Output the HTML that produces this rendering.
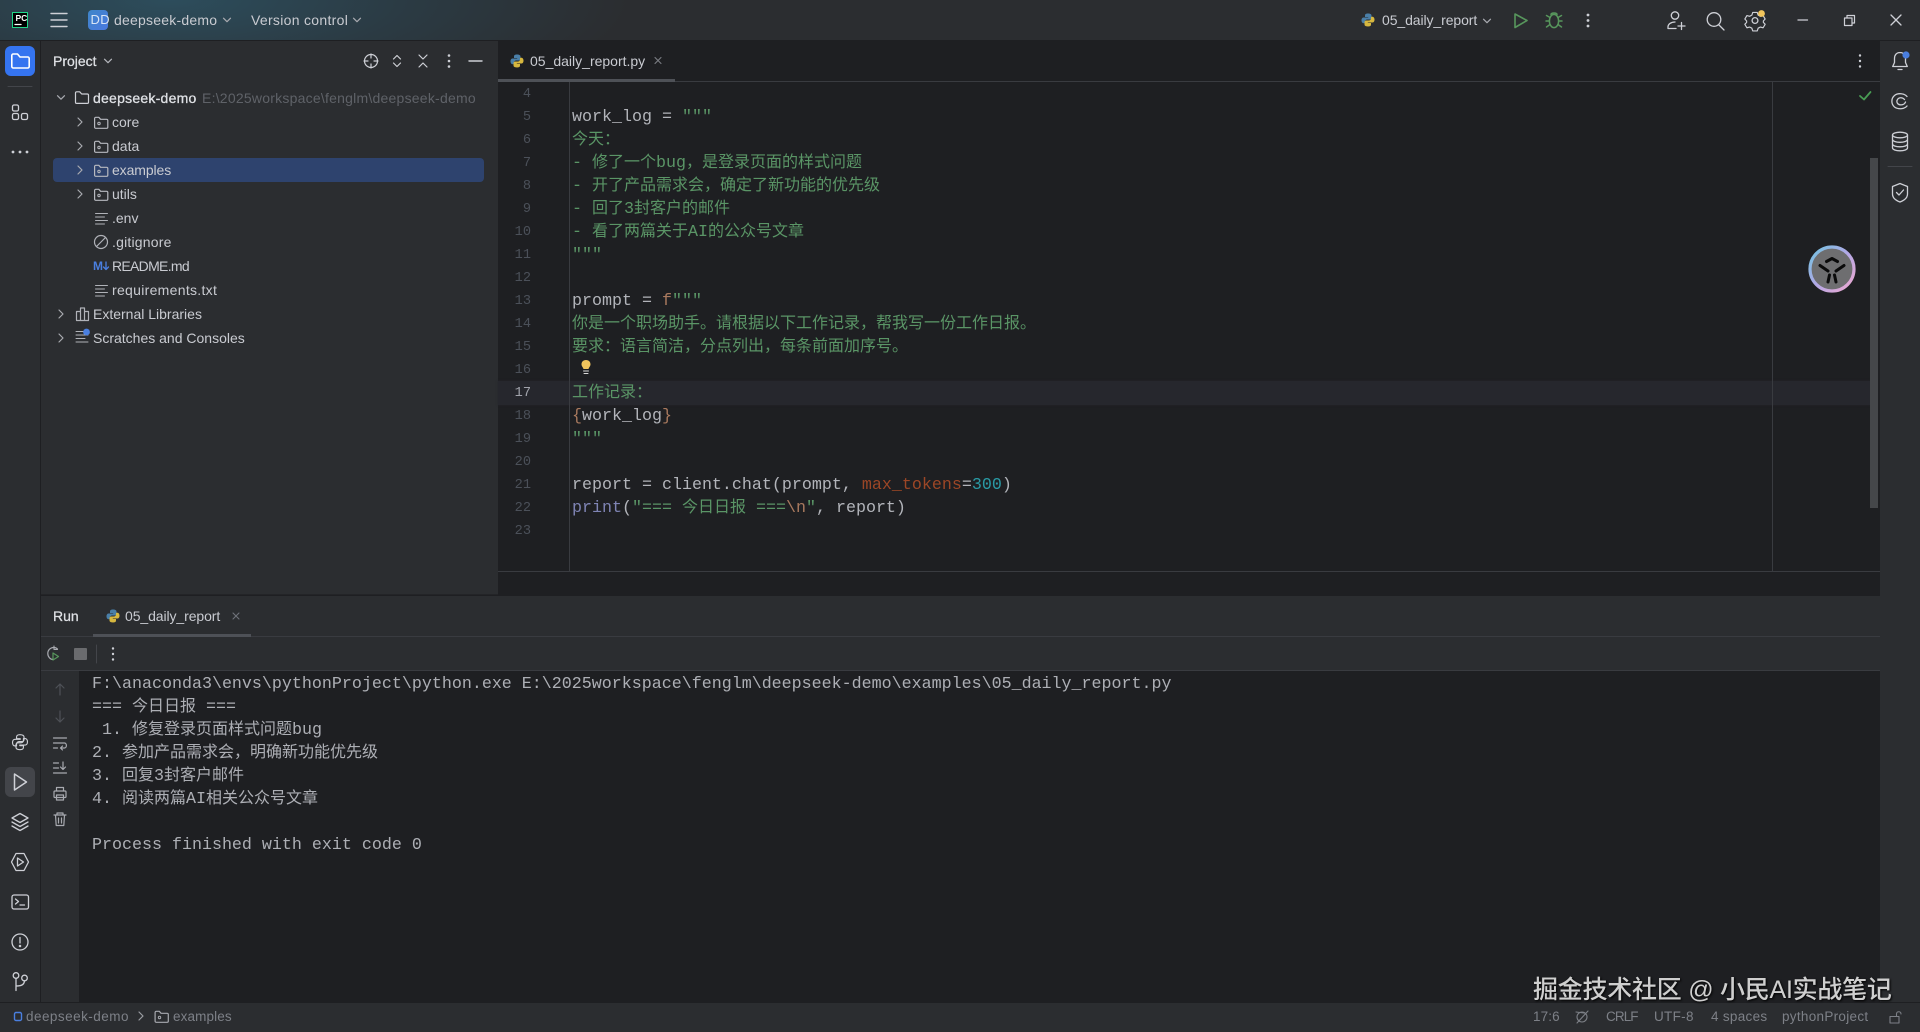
<!DOCTYPE html>
<html lang="zh-CN"><head><meta charset="utf-8"><title>PyCharm</title>
<style>
*{margin:0;padding:0;box-sizing:border-box}
html,body{width:1920px;height:1032px;overflow:hidden;background:#1e1f22}
body{position:relative;font-family:"Liberation Sans","Noto Sans CJK SC",sans-serif;font-size:14px;color:#dfe1e5}
.b{position:absolute}
.t{position:absolute;line-height:20px;height:20px;white-space:pre;color:#c9cbd1}
.c,.n{position:absolute;white-space:pre;font-family:"Liberation Mono","Noto Sans CJK SC",monospace;line-height:23px;height:23px}
.c{left:572px;font-size:16.67px;color:#b2b4ba}
.c i,.o i{font-style:normal;font-size:16px;line-height:0;font-family:"Noto Sans CJK SC",sans-serif}
.n{left:500px;width:31px;text-align:right;font-size:13.6px;color:#4b5059}
.s{color:#5a9566}.k{color:#a8795e}.p{color:#9c4626}.m{color:#2a9aa5}.f{color:#7f84b4}
.o{position:absolute;left:92px;white-space:pre;font-family:"Liberation Mono","Noto Sans CJK SC",monospace;font-size:16.67px;line-height:23px;height:23px;color:#adafb5}
svg{position:absolute;left:0;top:0}
.st{color:#7d8087;font-size:13.5px;letter-spacing:.3px}
</style></head><body>
<!-- backgrounds -->
<div class="b" style="left:0;top:0;width:1920px;height:40px;background:radial-gradient(ellipse 460px 120px at 170px 0,#2d4d5c 0%,#2b3b44 50%,#2b2d30 100%),#2b2d30"></div>
<div class="b" style="left:0;top:40px;width:1920px;height:1px;background:#1e1f22"></div>
<div class="b" style="left:0;top:41px;width:40px;height:961px;background:#2b2d30"></div>
<div class="b" style="left:40px;top:41px;width:1px;height:961px;background:#1e1f22"></div>
<div class="b" style="left:41px;top:41px;width:457px;height:553px;background:#2b2d30"></div>
<div class="b" style="left:498px;top:81px;width:1382px;height:1px;background:#393b40"></div>
<div class="b" style="left:498px;top:381px;width:1372px;height:24px;background:#26272d;box-shadow:0 0 2px #26272d"></div>
<div class="b" style="left:569px;top:82px;width:1px;height:489px;background:#393b40"></div>
<div class="b" style="left:1772px;top:82px;width:1px;height:489px;background:#393b40"></div>
<div class="b" style="left:498px;top:571px;width:1382px;height:1px;background:#393b40"></div>
<div class="b" style="left:1870px;top:158px;width:8px;height:350px;background:#45474a"></div>
<div class="b" style="left:1880px;top:41px;width:40px;height:961px;background:#2b2d30"></div>
<div class="b" style="left:41px;top:594px;width:457px;height:1px;background:#232427"></div>
<div class="b" style="left:41px;top:596px;width:1839px;height:75px;background:#2b2d30"></div>
<div class="b" style="left:41px;top:636px;width:1839px;height:1px;background:#393b40"></div>
<div class="b" style="left:41px;top:670px;width:1839px;height:1px;background:#393b40"></div>
<div class="b" style="left:41px;top:671px;width:38px;height:331px;background:#2b2d30"></div>
<div class="b" style="left:0;top:1002px;width:1920px;height:30px;background:#2b2d30;border-top:1px solid #1e1f22"></div>
<div class="b" style="left:53px;top:158px;width:431px;height:24px;background:#2e436e;border-radius:4px"></div>
<div class="b" style="left:498px;top:79px;width:177px;height:3px;background:#4e5157"></div>
<div class="b" style="left:93px;top:634px;width:158px;height:3px;background:#4e5157"></div>
<div class="b" style="left:5px;top:46px;width:30px;height:30px;background:#3574f0;border-radius:6px"></div>
<div class="b" style="left:5px;top:767px;width:30px;height:30px;background:#43454a;border-radius:6px"></div>
<div class="b" style="left:88px;top:10px;width:20px;height:20px;background:linear-gradient(135deg,#3f86c8,#4a79e0);border-radius:4px"></div>

<!-- icons -->
<svg width="1920" height="1032" viewBox="0 0 1920 1032" fill="none" stroke="#ced0d6" stroke-width="1.2" stroke-linecap="round" stroke-linejoin="round">
<defs>
<g id="fo"><path d="M.6 2a1.2 1.2 0 0 1 1.2-1.2h3l1.8 2h6a1.2 1.2 0 0 1 1.2 1.2v6.6a1.2 1.2 0 0 1-1.2 1.2H1.8A1.2 1.2 0 0 1 .6 10.6z"/><circle cx="5" cy="7" r="1.2" stroke-width="1"/></g>
<g id="ln"><path d="M.5 .5h12M.5 4h9M.5 7.5h12M.5 11h9" stroke-width="1" stroke="#b0b2b8"/></g>
<g id="py" stroke="none"><path fill="#4a7fa8" d="M8 1.5c-3 0-3 1.3-3 2.2V5h3.2v.5H3.7C2.5 5.5 1.5 6.5 1.5 8.3s.9 2.9 2.1 2.9H5V9.6c0-1.2 1-2.1 2.2-2.1h2.6c1 0 1.7-.8 1.7-1.8V3.6c0-1.2-1-2.1-3.5-2.1z"/><path fill="#d6b73f" d="M8 14.5c3 0 3-1.3 3-2.2V11H7.8v-.5h4.5c1.2 0 2.2-1 2.2-2.8s-.9-2.9-2.1-2.9H11v1.6c0 1.2-1 2.1-2.2 2.1H6.2c-1 0-1.7.8-1.7 1.8v2.1c0 1.2 1 2.1 3.5 2.1z"/></g>
<path id="cr" d="M0 -4l4 4-4 4"/>
<path id="cd" d="M-3.5 -1.8l3.5 3.5 3.5-3.5"/>
</defs>
<!-- title bar -->
<rect x="12.5" y="12.5" width="15" height="15" fill="#000" stroke="#21d789" stroke-width="1"/>
<path d="M15 24.5h6" stroke="#fff" stroke-width="1.3"/>
<path d="M51 13.5h16M51 20h16M51 26.5h16" stroke-width="1.4"/>
<use href="#cd" x="227" y="20" stroke="#a8aab0"/>
<use href="#cd" x="357" y="20" stroke="#a8aab0"/>
<use href="#py" x="1360" y="12"/>
<use href="#cd" x="1487" y="21" stroke="#a8aab0"/>
<path d="M1515 14l12 6.5-12 7z" stroke="#57965c" stroke-width="1.6"/>
<g stroke="#57965c" stroke-width="1.5"><ellipse cx="1554" cy="21" rx="4.6" ry="6.6"/><path d="M1551 14.5c0-2 6-2 6 0M1546.5 15.5l3.5 2M1561.5 15.5l-3.5 2M1546 21h3.4M1562 21h-3.4M1546.5 27l3.5-2.5M1561.5 27l-3.5-2.5"/></g>
<g fill="#ced0d6" stroke="none"><circle cx="1588" cy="15" r="1.4"/><circle cx="1588" cy="20.5" r="1.4"/><circle cx="1588" cy="26" r="1.4"/></g>
<g stroke-width="1.3"><circle cx="1675" cy="15.5" r="3.7"/><path d="M1668 28.5v-1.5c0-2.8 3-5 7-5M1668 28.5h8M1681.5 22.5v7M1678 26h7"/>
<circle cx="1714" cy="19.5" r="6.8"/><path d="M1719 25l5 5"/>
<path d="M1752.5 11.5h5l1 3 2.5 1.3 3-.8 2.3 3.8-2 2.2v1.5l2 2.2-2.3 3.8-3-.8-2.5 1.3-1 3h-5l-1-3-2.5-1.3-3 .8-2.3-3.8 2-2.2V21l-2-2.2 2.3-3.8 3 .8 2.5-1.3z" transform="translate(175.5 2.1) scale(.9)"/><circle cx="1755" cy="20.5" r="2.9"/></g>
<circle cx="1761.5" cy="13.5" r="3.4" fill="#f2c55c" stroke="none"/>
<path d="M1798 20h9.5" stroke-width="1.3"/>
<path d="M1844.5 18h7.5v7.5h-7.5zM1847 18v-2.5h7.5v7.5H1852" stroke-width="1.2"/>
<path d="M1891 15l10 10M1901 15l-10 10" stroke-width="1.3"/>
<!-- left strip -->
<path d="M11.8 55.5a1.5 1.5 0 0 1 1.5-1.5h4.2l2.5 3h7.7a1.5 1.5 0 0 1 1.5 1.5v8a1.5 1.5 0 0 1-1.5 1.5H13.3a1.5 1.5 0 0 1-1.5-1.5z" stroke="#fff" stroke-width="1.6"/>
<path d="M8 86.5h24" stroke="#43454a" stroke-width="1"/>
<g stroke-width="1.3"><rect x="12.5" y="105" width="6" height="6" rx="1.5"/><rect x="12.5" y="113.5" width="6" height="6" rx="1.5"/><rect x="21.5" y="113.5" width="6" height="6" rx="1.5"/></g>
<g fill="#ced0d6" stroke="none"><circle cx="13" cy="152" r="1.4"/><circle cx="20" cy="152" r="1.4"/><circle cx="27" cy="152" r="1.4"/></g>
<!-- python console -->
<g stroke-width="1" transform="translate(10.8 733) scale(1.15)"><path d="M8 1.5c-3 0-3 1.3-3 2.2V5h3.2v.5H3.7C2.5 5.5 1.5 6.5 1.5 8.3s.9 2.9 2.1 2.9H5V9.6c0-1.2 1-2.1 2.2-2.1h2.6c1 0 1.7-.8 1.7-1.8V3.6c0-1.2-1-2.1-3.5-2.1z"/><path d="M8 14.5c3 0 3-1.3 3-2.2V11H7.8v-.5h4.5c1.2 0 2.2-1 2.2-2.8s-.9-2.9-2.1-2.9H11v1.6c0 1.2-1 2.1-2.2 2.1H6.2c-1 0-1.7.8-1.7 1.8v2.1c0 1.2 1 2.1 3.5 2.1z"/></g>
<path d="M14.5 774l12 8-12 8z" stroke-width="1.5"/>
<g stroke-width="1.3"><path d="M20 813.5l8 4.5-8 4.5-8-4.5zM12 822l8 4.5 8-4.5M12 826l8 4.5 8-4.5"/>
<path d="M16 853.5h8l4.5 8.5-4.5 8.5h-8l-4.5-8.5z"/><path d="M17.5 858l6 4-6 4z"/>
<rect x="12" y="895" width="16.5" height="14" rx="2"/><path d="M15.5 899l3 2.5-3 2.5M20 905h4.5"/>
<circle cx="20" cy="942" r="8"/><path d="M20 937.5v5.5"/><circle cx="20" cy="946" r=".6"/>
<circle cx="16" cy="975.5" r="2.8"/><circle cx="24.5" cy="978" r="2.8"/><path d="M16 978.5v12M16 986c5 0 8-1 8.500-5"/></g>
<!-- project header -->
<circle cx="371" cy="61" r="6.5"/><path d="M371 54v4M371 64v4M364 61h4M374 61h4"/>
<path d="M393.5 59l3.5-3.5 3.5 3.5M393.5 63l3.5 3.5 3.5-3.5"/>
<path d="M419 55l4 4 4-4M419 67l4-4 4 4"/>
<g fill="#ced0d6" stroke="none"><circle cx="449" cy="55.5" r="1.3"/><circle cx="449" cy="61" r="1.3"/><circle cx="449" cy="66.5" r="1.3"/></g>
<path d="M469 61h13" stroke-width="1.4"/>
<use href="#cd" x="108" y="61" stroke="#b4b6bc"/>
<!-- tree -->
<use href="#cd" x="61" y="97.5" stroke="#a8aab0"/>
<path d="M75.5 93a1.2 1.2 0 0 1 1.2-1.2h3l2 2.2h5.600a1.2 1.2 0 0 1 1.2 1.2v7a1.2 1.2 0 0 1-1.2 1.2H76.7a1.2 1.2 0 0 1-1.2-1.2z"/>
<g stroke="#a8aab0"><use href="#cr" x="78" y="122"/><use href="#cr" x="78" y="146"/><use href="#cr" x="78" y="170"/><use href="#cr" x="78" y="194"/><use href="#cr" x="59" y="314"/><use href="#cr" x="59" y="338"/></g>
<use href="#fo" x="94" y="116.5" stroke="#b8bac0"/><use href="#fo" x="94" y="140.5" stroke="#b8bac0"/><use href="#fo" x="94" y="164.5" stroke="#b8bac0"/><use href="#fo" x="94" y="188.5" stroke="#b8bac0"/>
<use href="#ln" x="95" y="213"/><use href="#ln" x="95" y="285"/>
<g stroke="#b0b2b8"><circle cx="101" cy="242" r="6.5"/><path d="M96.5 246.5l9-9"/>
<path d="M76.5 320v-8.500h4V320M80.5 320v-12h4v12M84.5 320v-8.500h4V320M76.5 320.5h12"/>
<path d="M76 331.5h8M76 335h12M76 338.5h9M76 342h12" stroke-width="1"/></g>
<circle cx="86.5" cy="332" r="3.4" fill="#4a7fe0" stroke="none"/>
<path d="M106 262v7M103.5 267l2.5 2.5 2.5-2.5" stroke="#4a7fe0" stroke-width="1.3"/>
<!-- editor tab -->
<use href="#py" x="509" y="53"/>
<path d="M655 57.5l6 6M661 57.5l-6 6" stroke="#7a7d83" stroke-width="1.1"/>
<g fill="#ced0d6" stroke="none"><circle cx="1860" cy="55.5" r="1.2"/><circle cx="1860" cy="61" r="1.2"/><circle cx="1860" cy="66.5" r="1.2"/></g>
<path d="M1860 96l4 3.5 6.5-7.5" stroke="#499c54" stroke-width="1.8"/>
<!-- bulb -->
<path d="M586 360c-2.8 0-4.500 2-4.500 4.300 0 2 1.500 3 2 4.700h5c.5-1.700 2-2.700 2-4.700 0-2.300-1.700-4.300-4.500-4.300z" fill="#f2c55c" stroke="none"/>
<path d="M583.5 371h5M584 373.500h4" stroke="#d8d8d8" stroke-width="1"/>
<!-- ai circle -->
<defs><linearGradient id="rg" x1="0" y1="0" x2="1" y2="1"><stop offset="0" stop-color="#6fc3e0"/><stop offset=".5" stop-color="#b3a8e6"/><stop offset="1" stop-color="#f0a8cf"/></linearGradient></defs>
<circle cx="1832" cy="269" r="22" fill="#6e6e70" stroke="url(#rg)" stroke-width="3.2"/>
<g stroke="#0a0a0a" stroke-width="3" stroke-linecap="round"><path d="M1820 265.5l8 5.500M1844 265.5l-8 5.500M1826.5 261.5l5.500-3 5.500 3M1829.5 275l-1.500 7M1834.5 275l1.500 7"/></g>
<!-- right strip -->
<g stroke-width="1.3"><path d="M1900 52.5c-3.500 0-5.500 2.500-5.500 6v4l-1.800 4h14.600l-1.800-4v-4c0-3.500-2-6-5.500-6zM1898 69.5h4"/>
<path d="M1907 96.5c-2.500-3-9-4-12.500-1-3.500 3-3.500 8.500 0 11.500 3.500 2.500 9.500 2.500 12.500-1M1904.5 99.5c-2-2.300-5.500-2.300-7 0-1.500 2.300 0 5 2.500 5.300 2.500.3 4.800-.8 5.500-2.800"/>
<ellipse cx="1900" cy="135" rx="7.5" ry="2.8"/><path d="M1892.5 135v13c0 1.500 3.300 2.800 7.500 2.800s7.500-1.300 7.500-2.800v-13M1892.5 139.5c0 1.500 3.300 2.800 7.500 2.800s7.500-1.300 7.500-2.800M1892.5 144c0 1.500 3.300 2.800 7.500 2.800s7.500-1.300 7.500-2.800"/>
<path d="M1888 166.5h24" stroke="#43454a" stroke-width="1"/>
<path d="M1900 183.5l7.500 3v7.500c0 4-3.500 6.500-7.500 8-4-1.500-7.500-4-7.500-8v-7.500z"/><path d="M1896.5 192.5l2.500 2.500 4.500-5"/></g>
<circle cx="1906" cy="55" r="3.6" fill="#4a7fe0" stroke="none"/>
<!-- run -->
<use href="#py" x="105" y="608"/>
<path d="M233 613l6 6M239 613l-6 6" stroke="#6f737a" stroke-width="1.1"/>
<g transform="translate(-2 0)"><path d="M59.5 649c-1-1-2.300-1.500-3.700-1.500-3.400 0-6 2.600-6 6s2.600 6 5 6" stroke="#a8aab0" stroke-width="1.2"/><path d="M56 646v3.500h3.500" stroke="#a8aab0" stroke-width="1.1"/>
<path d="M55 653l5.500 3.500-5.500 3.500z" stroke="#57965c" stroke-width="1.2"/></g>
<rect x="74" y="648" width="13" height="12" rx="1" fill="#6a6b6e" stroke="none"/>
<path d="M96.5 645v18" stroke="#43454a" stroke-width="1"/>
<g fill="#ced0d6" stroke="none"><circle cx="113" cy="648.5" r="1.2"/><circle cx="113" cy="654" r="1.2"/><circle cx="113" cy="659.5" r="1.2"/></g>
<!-- run side -->
<g stroke="#4e5157" stroke-width="1.2"><path d="M60 684v11M56 688l4-4 4 4"/><path d="M60 711v11M56 718l4 4 4-4"/></g>
<g stroke="#a8aab0" stroke-width="1.2"><path d="M53.5 738h13M53.5 743h11c2.500 0 2.500 5 0 5h-4M62.5 746l-2 2 2 2M53.5 748h4"/>
<path d="M53.5 763h5M53.5 768h5M53.5 773h13M63 762v7M60.5 767l2.500 2.500 2.500-2.500"/>
<rect x="54" y="791" width="12" height="6.5" rx="1"/><path d="M56.5 791v-3.500h7v3.500M56.5 795h7v5h-7z"/>
<path d="M54 815h12M57 815v-2h6v2M55.5 815l.7 10.500h7.600l.7-10.500M58.5 818v5M61.5 818v5"/></g>
<!-- status -->
<rect x="14.5" y="1012.5" width="7" height="8" rx="1.5" stroke="#4a7fe0" stroke-width="1.4"/>
<use href="#cr" x="139" y="1016" stroke="#9a9ca2"/>
<use href="#fo" x="154.5" y="1010.5" stroke="#a8aab0"/>
<g stroke="#7d8087" stroke-width="1.1"><circle cx="1582" cy="1017" r="5"/><path d="M1577 1023l11-12M1576 1012l8 1"/>
<path d="M1890 1016.5h9v6.500h-9zM1896.5 1016.5v-2.500c0-3 4.500-3 4.500 0"/></g>
</svg>

<!-- title text -->
<span class="t" style="left:15.5px;top:8px;font-size:8.5px;font-weight:700;color:#fff">PC</span>
<span class="t" style="left:90.5px;top:10px;color:#fff;font-size:13px;letter-spacing:.3px;opacity:.8">DD</span>
<span class="t" style="left:114px;top:10px;letter-spacing:.22px">deepseek-demo</span>
<span class="t" style="left:251px;top:10px;letter-spacing:.3px">Version control</span>
<span class="t" style="left:1382px;top:10px;letter-spacing:-.09px">05_daily_report</span>
<!-- project -->
<span class="t" style="left:53px;top:51px;color:#dfe1e5;-webkit-text-stroke:.25px #dfe1e5">Project</span>
<span class="t" style="left:93px;top:88px;color:#dfe1e5;-webkit-text-stroke:.3px #dfe1e5;letter-spacing:.24px">deepseek-demo</span>
<span class="t" style="left:202px;top:88px;color:#5f6268;letter-spacing:.23px">E:\2025workspace\fenglm\deepseek-demo</span>
<span class="t" style="left:112px;top:112px">core</span>
<span class="t" style="left:112px;top:136px">data</span>
<span class="t" style="left:112px;top:160px;letter-spacing:-.1px">examples</span>
<span class="t" style="left:112px;top:184px">utils</span>
<span class="t" style="left:112px;top:208px">.env</span>
<span class="t" style="left:112px;top:232px;letter-spacing:.2px">.gitignore</span>
<span class="t" style="left:93px;top:256px;color:#4a7fe0;font-weight:700;font-size:12px">M</span>
<span class="t" style="left:112px;top:256px;letter-spacing:-.7px">README.md</span>
<span class="t" style="left:112px;top:280px;letter-spacing:.3px">requirements.txt</span>
<span class="t" style="left:93px;top:304px">External Libraries</span>
<span class="t" style="left:93px;top:328px">Scratches and Consoles</span>
<!-- tab -->
<span class="t" style="left:530px;top:51px">05_daily_report.py</span>
<!-- line numbers -->
<div class="n" style="top:83px">4</div><div class="n" style="top:106px">5</div><div class="n" style="top:129px">6</div><div class="n" style="top:152px">7</div><div class="n" style="top:175px">8</div><div class="n" style="top:198px">9</div><div class="n" style="top:221px">10</div><div class="n" style="top:244px">11</div><div class="n" style="top:267px">12</div><div class="n" style="top:290px">13</div><div class="n" style="top:313px">14</div><div class="n" style="top:336px">15</div><div class="n" style="top:359px">16</div><div class="n" style="top:382px;color:#a1a3ab">17</div><div class="n" style="top:405px">18</div><div class="n" style="top:428px">19</div><div class="n" style="top:451px">20</div><div class="n" style="top:474px">21</div><div class="n" style="top:497px">22</div><div class="n" style="top:520px">23</div>
<!-- code -->
<div class="c" style="top:106px">work_log = <span class="s">"""</span></div>
<div class="c s" style="top:129px"><i>今天：</i></div>
<div class="c s" style="top:152px">- <i>修了一个</i>bug<i>，是登录页面的样式问题</i></div>
<div class="c s" style="top:175px">- <i>开了产品需求会，确定了新功能的优先级</i></div>
<div class="c s" style="top:198px">- <i>回了</i>3<i>封客户的邮件</i></div>
<div class="c s" style="top:221px">- <i>看了两篇关于</i>AI<i>的公众号文章</i></div>
<div class="c s" style="top:244px">"""</div>
<div class="c" style="top:290px">prompt = <span class="k">f</span><span class="s">"""</span></div>
<div class="c s" style="top:313px"><i>你是一个职场助手。请根据以下工作记录，帮我写一份工作日报。</i></div>
<div class="c s" style="top:336px"><i>要求：语言简洁，分点列出，每条前面加序号。</i></div>
<div class="c s" style="top:382px"><i>工作记录：</i></div>
<div class="c" style="top:405px"><span class="k">{</span>work_log<span class="k">}</span></div>
<div class="c s" style="top:428px">"""</div>
<div class="c" style="top:474px">report = client.chat(prompt, <span class="p">max_tokens</span>=<span class="m">300</span>)</div>
<div class="c" style="top:497px"><span class="f">print</span>(<span class="s">"=== <i>今日日报</i> ===</span><span class="k">\n</span><span class="s">"</span>, report)</div>
<!-- run -->
<span class="t" style="left:53px;top:606px;color:#dfe1e5;-webkit-text-stroke:.25px #dfe1e5">Run</span>
<span class="t" style="left:125px;top:606px;letter-spacing:-.09px">05_daily_report</span>
<div class="o" style="top:673px">F:\anaconda3\envs\pythonProject\python.exe E:\2025workspace\fenglm\deepseek-demo\examples\05_daily_report.py</div>
<div class="o" style="top:696px">=== <i>今日日报</i> ===</div>
<div class="o" style="top:719px"> 1. <i>修复登录页面样式问题</i>bug</div>
<div class="o" style="top:742px">2. <i>参加产品需求会，明确新功能优先级</i></div>
<div class="o" style="top:765px">3. <i>回复</i>3<i>封客户邮件</i></div>
<div class="o" style="top:788px">4. <i>阅读两篇</i>AI<i>相关公众号文章</i></div>
<div class="o" style="top:834px">Process finished with exit code 0</div>
<!-- watermark -->
<span class="t" style="left:1533px;top:975px;height:30px;line-height:30px;font-size:25px;color:#cfcfcf;letter-spacing:-.25px;text-shadow:1px 1px 2px #000;font-weight:500">掘金技术社区 @ 小民AI实战笔记</span>
<!-- status -->
<span class="t st" style="left:26px;top:1007px;letter-spacing:.47px">deepseek-demo</span>
<span class="t st" style="left:173px;top:1007px;letter-spacing:.12px">examples</span>
<span class="t st" style="left:1533px;top:1007px;letter-spacing:.1px">17:6</span>
<span class="t st" style="left:1606px;top:1007px;letter-spacing:-.9px">CRLF</span>
<span class="t st" style="left:1654px;top:1007px">UTF-8</span>
<span class="t st" style="left:1711px;top:1007px">4 spaces</span>
<span class="t st" style="left:1782px;top:1007px">pythonProject</span>
</body></html>
